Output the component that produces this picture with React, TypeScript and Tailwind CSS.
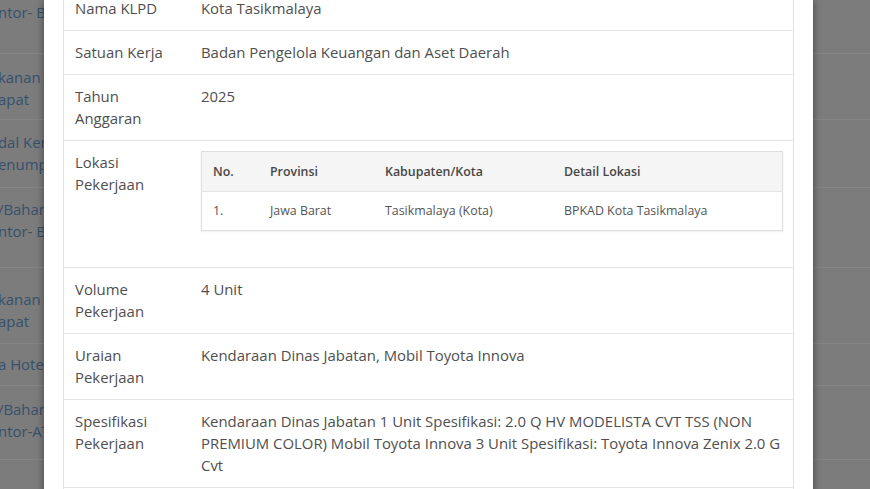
const bgRows = [
  { h: "h-[54px]", pt: "pt-[1px]", lines: ["ntor- Bahan"] },
  { h: "h-[66px]", pt: "pt-[12px]", lines: ["kanan (Rapat", "apat"] },
  { h: "h-[68px]", pt: "pt-[11px]", lines: ["dal Kerja", "enumpang"] },
  { h: "h-[80px]", pt: "pt-[10px]", lines: ["/Bahan", "ntor- Bahan"] },
  { h: "h-[76px]", pt: "pt-[20px]", lines: ["kanan (Rapat", "apat"] },
  { h: "h-[42px]", pt: "pt-[9px]", lines: ["a Hotel"] },
  { h: "h-[74px]", pt: "pt-[12px]", lines: ["/Bahan", "ntor-ATK"] },
];

type Row = { label: string[]; value: React.ReactNode };

const rows: Row[] = [
  { label: ["Nama KLPD"], value: "Kota Tasikmalaya" },
  { label: ["Satuan Kerja"], value: "Badan Pengelola Keuangan dan Aset Daerah" },
  { label: ["Tahun", "Anggaran"], value: "2025" },
  { label: ["Lokasi", "Pekerjaan"], value: <LokasiTable /> },
  { label: ["Volume", "Pekerjaan"], value: "4 Unit" },
  { label: ["Uraian", "Pekerjaan"], value: "Kendaraan Dinas Jabatan, Mobil Toyota Innova" },
  {
    label: ["Spesifikasi", "Pekerjaan"],
    value: (
      <>
        <span className="block whitespace-nowrap">Kendaraan Dinas Jabatan 1 Unit Spesifikasi: 2.0 Q HV MODELISTA CVT TSS (NON</span>
        <span className="block whitespace-nowrap">PREMIUM COLOR) Mobil Toyota Innova 3 Unit Spesifikasi: Toyota Innova Zenix 2.0 G</span>
        <span className="block whitespace-nowrap">Cvt</span>
      </>
    ),
  },
  { label: ["Sumber Dana"], value: "APBD" },
];

function LokasiTable() {
  return (
    <div className="mb-[25px] border border-[#dedede] text-[12.4px] shadow-[0_1px_2px_rgba(0,0,0,0.06)]">
      <div className="grid grid-cols-[57px_115px_179px_1fr] bg-[#f5f5f5] font-semibold text-[#474747] leading-[19px]">
        <div className="px-[11px] py-[10px]">No.</div>
        <div className="px-[11px] py-[10px]">Provinsi</div>
        <div className="px-[11px] py-[10px]">Kabupaten/Kota</div>
        <div className="px-[11px] py-[10px]">Detail Lokasi</div>
      </div>
      <div className="grid grid-cols-[57px_115px_179px_1fr] border-t border-[#e4e4e4] leading-[18px] text-[#555]">
        <div className="px-[11px] py-[10px]">1.</div>
        <div className="px-[11px] py-[10px]">Jawa Barat</div>
        <div className="px-[11px] py-[10px]">Tasikmalaya (Kota)</div>
        <div className="px-[11px] py-[10px]">BPKAD Kota Tasikmalaya</div>
      </div>
    </div>
  );
}

export default function App() {
  return (
    <div className="relative h-[489px] w-[870px] overflow-hidden bg-[#7c7c7c] font-['Open_Sans','Noto_Sans',sans-serif] text-[14.9px] leading-[22px]">
      {/* page behind the dialog, already dimmed */}
      <div className="flex flex-col">
        {bgRows.map((r, i) => (
          <div key={i} className={`${r.h} ${r.pt} border-b border-[#868686] text-[#36506c]`}>
            {r.lines.map((l, j) => (
              <div key={j} className="-ml-[2px] whitespace-nowrap">
                {l}
              </div>
            ))}
          </div>
        ))}
      </div>

      {/* dialog */}
      <div className="absolute left-[44px] top-0 h-[520px] w-[769px] bg-white px-[19px] shadow-[0_0_8px_rgba(0,0,0,0.45)]">
        <div className="-mt-[13px] border-x border-[#e0e0e0] text-[#4f4f4f]">
          {rows.map((row, i) => (
            <div key={i} className="grid grid-cols-[126px_1fr] border-b border-[#e6e6e6]">
              <div className="pl-[11px] pr-[8px] pt-[10px] pb-[11px]">
                {row.label.map((l) => (
                  <div key={l}>{l}</div>
                ))}
              </div>
              <div className="pl-[11px] pr-[10px] pt-[10px] pb-[11px]">{row.value}</div>
            </div>
          ))}
        </div>
      </div>
    </div>
  );
}
